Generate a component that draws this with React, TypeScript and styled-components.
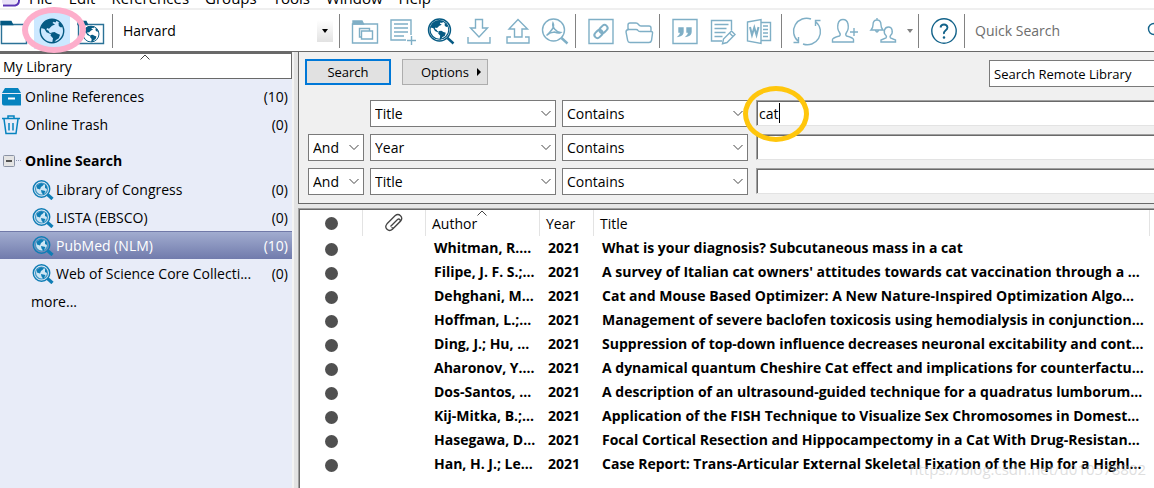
import React from 'react';
import styled, { createGlobalStyle } from 'styled-components';

const GlobalStyle = createGlobalStyle`
  * { box-sizing: border-box; }
  body { margin: 0; background: #fff; }
  body, button, input, select, table {
    font-family: 'Open Sans', 'Noto Sans', sans-serif;
    font-size: 14px;
    line-height: 20px;
    color: #000;
  }
`;

const Page = styled.div`
  display: flex;
  flex-direction: column;
  min-height: 100vh;
  overflow: hidden;
  position: relative;
`;

/* Menu bar */
const MenuBar = styled.nav`
  display: flex;
  align-items: flex-end;
  height: 10px;
  border-bottom: 2px solid #efefef;
  overflow: hidden;
`;
const Logo = styled.svg`
  flex: none;
  width: 20px;
  height: 20px;
  margin: 0 8px 1px 1px;
`;
const MenuItem = styled.button`
  flex: none;
  height: 20px;
  margin-right: 16px;
  padding: 0;
  border: 0;
  background: none;
  font-size: 15px;
  white-space: nowrap;
`;

/* Toolbar */
const Toolbar = styled.div`
  display: flex;
  align-items: center;
  height: 42px;
  border-bottom: 1px solid #696969;
`;
const ModeGroup = styled.div`
  display: flex;
  flex: none;
  margin-left: -5px;
  padding-right: 2px;
`;
const ToolButton = styled.button<{ $active?: boolean }>`
  position: relative;
  flex: none;
  display: flex;
  align-items: center;
  justify-content: center;
  width: 38px;
  height: 36px;
  padding: 0;
  border: 1px solid #fff;
  border-width: 0 1px;
  background: ${(p) => (p.$active ? '#cce8ff' : 'none')};
`;
const Divider = styled.span`
  flex: none;
  width: 1px;
  height: 34px;
  margin: 0 6px 0 1px;
  background: #828282;
`;
const Glyph = styled.svg<{ $tone?: string }>`
  flex: none;
  width: 28px;
  height: 28px;
  overflow: visible;
  fill: none;
  stroke: ${(p) => p.$tone || '#7fafc6'};
  stroke-width: 1.4;
`;
const PinkRing = styled.span`
  position: absolute;
  z-index: 2;
  left: -12px;
  top: -6px;
  width: 64px;
  height: 46px;
  border: 6px solid #fdaecb;
  border-radius: 50%;
  pointer-events: none;
`;
const StyleBox = styled.div`
  position: relative;
  flex: none;
  display: flex;
  align-items: center;
  width: 219px;
`;
const StyleSelect = styled.select`
  appearance: none;
  width: 100%;
  height: 26px;
  padding: 0 24px 0 4px;
  border: 0;
  background: #fff;
`;
const StyleArrow = styled.span`
  position: absolute;
  right: 5px;
  display: flex;
  align-items: center;
  justify-content: center;
  width: 16px;
  height: 22px;
  background: linear-gradient(#fff, #e2e2e2);
  pointer-events: none;
`;
const Triangle = styled.span<{ $color: string }>`
  border: 3px solid transparent;
  border-top: 4px solid ${(p) => p.$color};
  border-bottom: 0;
`;
const MoreButton = styled.button`
  flex: none;
  display: flex;
  align-items: center;
  justify-content: center;
  width: 15px;
  height: 34px;
  padding: 0;
  border: 0;
  background: none;
`;
const QuickSearch = styled.label`
  display: flex;
  align-items: center;
  flex: 1;
  min-width: 0;
  margin-right: -12px;
`;
const QuickInput = styled.input`
  flex: 1;
  min-width: 0;
  height: 26px;
  padding: 0 4px;
  border: 0;
  outline: 0;
  &::placeholder { color: #6d6d6d; opacity: 1; }
`;

/* Body */
const Body = styled.div`
  display: flex;
  flex: 1;
`;
const Sidebar = styled.aside`
  flex: none;
  width: 292px;
  background: #e8ecf8;
`;
const LibraryHeader = styled.button`
  position: relative;
  display: block;
  width: 100%;
  height: 27px;
  padding: 2px 3px 0;
  border: 1px solid #696969;
  border-top-width: 2px;
  border-left: 0;
  background: #fff;
  text-align: left;
`;
const SortMark = styled.svg`
  position: absolute;
  left: calc(50% - 6px);
  top: 0;
  width: 10px;
  height: 6px;
  fill: none;
  stroke: #444;
`;
const GroupList = styled.ul`
  margin: 0;
  padding: 4px 0 0;
  list-style: none;
`;
const GroupRow = styled.li<{ $inset?: number; $selected?: boolean; $head?: boolean }>`
  display: flex;
  align-items: center;
  height: 28px;
  margin-top: ${(p) => (p.$head ? 8 : 0)}px;
  padding: ${(p) => (p.$inset ? 2 : 0)}px 4px 0 ${(p) => p.$inset ?? 1}px;
  font-weight: ${(p) => (p.$head ? 700 : 400)};
  color: ${(p) => (p.$selected ? '#fff' : '#000')};
  background: ${(p) => (p.$selected ? 'linear-gradient(#a3aed1, #717bac)' : 'none')};
  box-shadow: ${(p) => (p.$selected ? 'inset 0 1px 0 #7079a8' : 'none')};
`;
const RowIcon = styled.svg<{ $wide?: boolean }>`
  flex: none;
  width: ${(p) => (p.$wide ? 22 : 20)}px;
  height: 20px;
  margin-right: ${(p) => (p.$wide ? 2 : 4)}px;
`;
const GroupName = styled.span`
  flex: 1;
  white-space: nowrap;
`;
const Splitter = styled.div`
  flex: none;
  width: 6px;
  background: #e3e3e3;
  border-left: 2px solid #f4f4f4;
`;
const Main = styled.main`
  display: flex;
  flex-direction: column;
  flex: 1;
  min-width: 0;
  gap: 4px;
  background: #e6e6e6;
`;

/* Search panel */
const SearchPanel = styled.form`
  padding: 7px 0 8px 6px;
  background: #f0f0f0;
  border-left: 1px solid #696969;
  border-bottom: 1px solid #696969;
`;
const Actions = styled.div`
  display: flex;
  align-items: flex-start;
  gap: 11px;
  margin-bottom: 13px;
`;
const ActionButton = styled.button<{ $primary?: boolean }>`
  display: flex;
  align-items: center;
  justify-content: center;
  gap: 8px;
  width: 86px;
  height: 26px;
  padding: 0 0 0 ${(p) => (p.$primary ? 0 : 12)}px;
  border: ${(p) => (p.$primary ? '2px solid #0078d7' : '1px solid #adadad')};
  background: #e1e1e1;
  font-size: 13px;
`;
const RightMark = styled.span`
  border: 4px solid transparent;
  border-left: 4px solid #000;
  border-right: 0;
`;
const ScopeSelect = styled.select`
  appearance: none;
  width: 165px;
  height: 27px;
  margin: 1px 0 0 auto;
  padding: 0 4px;
  border: 1px solid #7a7a7a;
  border-right: 0;
  border-radius: 0;
  background: #fff;
  font-size: 13px;
`;
const Criteria = styled.div`
  display: grid;
  grid-template-columns: 56px 186px 186px 1fr;
  gap: 7px;
  column-gap: 6px;
  padding-left: 3px;
`;
const PickBox = styled.div`
  position: relative;
  display: flex;
`;
const Pick = styled.select`
  appearance: none;
  width: 100%;
  height: 27px;
  padding: 0 20px 0 4px;
  border: 1px solid #7a7a7a;
  border-radius: 0;
  background: #fff;
`;
const Chevron = styled.svg`
  position: absolute;
  right: 5px;
  top: 10px;
  width: 10px;
  height: 7px;
  fill: none;
  stroke: #444;
  pointer-events: none;
`;
const TermBox = styled.div`
  position: relative;
  padding-left: 2px;
`;
const Term = styled.input`
  width: 100%;
  height: 26px;
  padding: 0 2px;
  border: 1px solid #a0a0a0;
  border-bottom-color: #e3e3e3;
  border-right: 0;
  box-shadow: inset 1px 1px 0 #696969;
  outline: 0;
`;
const Caret = styled.span`
  position: absolute;
  left: 25px;
  top: 3px;
  width: 1px;
  height: 20px;
  background: #000;
`;
const YellowRing = styled.span`
  position: absolute;
  z-index: 2;
  left: -11px;
  top: -14px;
  width: 66px;
  height: 56px;
  border: 5px solid #ffc60c;
  border-radius: 50%;
  pointer-events: none;
`;

/* Results */
const Results = styled.div`
  flex: 1;
  background: #fff;
  border-top: 1px solid #a0a0a0;
  border-left: 1px solid #a0a0a0;
  box-shadow: inset 1px 1px 0 #696969;
  padding: 1px 0 0 1px;
`;
const Table = styled.table`
  width: 100%;
  table-layout: fixed;
  border-collapse: separate;
  border-spacing: 0;
`;
const Col = styled.col<{ $w?: number }>`
  width: ${(p) => (p.$w ? `${p.$w}px` : 'auto')};
`;
const HeadCell = styled.th<{ $center?: boolean }>`
  position: relative;
  height: 26px;
  padding: ${(p) => (p.$center ? '0 6px 2px' : '2px 6px 0')};
  border-right: 1px solid #e3e3e3;
  font-weight: 400;
  text-align: ${(p) => (p.$center ? 'center' : 'left')};
  white-space: nowrap;
`;
const Cell = styled.td<{ $center?: boolean }>`
  height: 24px;
  padding: 0 0 0 ${(p) => (p.$center ? 0 : 8)}px;
  font-weight: 700;
  font-size: 14px;
  text-align: ${(p) => (p.$center ? 'center' : 'left')};
  white-space: nowrap;
`;
const Dot = styled.span`
  display: inline-block;
  width: 13px;
  height: 13px;
  border-radius: 50%;
  background: #505050;
  vertical-align: middle;
`;
const ClipIcon = styled.svg`
  width: 20px;
  height: 20px;
  vertical-align: middle;
  fill: none;
  stroke: #444;
  stroke-width: 1.3;
`;
const Watermark = styled.span`
  position: absolute;
  right: 8px;
  bottom: 9px;
  color: rgba(190, 190, 190, 0.5);
  font-size: 15px;
  white-space: nowrap;
  pointer-events: none;
`;

const Land = ({ c }: { c: string }) => (
  <g fill={c} stroke="none">
    <path d="M3.500 9C5.500 4.500 9.500 2.300 14 2.300L19 3l-1.500 2.500-2-.8-1 1.300 2.500 1.500-3 1.200-3 3-2-.7-.5 1.800 2 1 .8 1.700 2 .8-.8.8-4-1.800L6.500 12 3 11z" />
    <path d="M13.500 15.500l3-.5 2.500 1.500 3 1.200-1.200 3.500-2.800 1.800-2.500 3.300-1.200-.8.7-4.200-2.500-2.800z" />
    <path d="M20.500 6l2-.2 2 4-1.500.7-2.200-1.500z" />
  </g>
);
const Globe = ({ c }: { c: string }) => (
  <>
    <circle cx="14" cy="14" r="11.7" stroke={c} />
    <Land c={c} />
  </>
);
const NAVY = '#055a83';

const FolderIcon = () => (
  <Glyph $tone="#2b7297">
    <path d="M1.500 7.500h25v19h-25z" />
    <path d="M1 4.500h10l1.500 3H1z" fill={NAVY} stroke={NAVY} />
  </Glyph>
);
const GlobeIcon = () => (
  <Glyph $tone={NAVY}><Globe c={NAVY} /></Glyph>
);
const FolderGlobeIcon = () => (
  <Glyph $tone="#2b7297">
    <path d="M2.500 7.500h25v19h-25z" />
    <path d="M2 4.500h8l1.500 3H2z" fill={NAVY} stroke={NAVY} />
    <circle cx="15" cy="17" r="9" fill="#fff" stroke="none" />
    <g transform="translate(5.500 7.500) scale(.68)"><Globe c={NAVY} /></g>
  </Glyph>
);
const CopyGroupIcon = () => (
  <Glyph>
    <path d="M1.500 7h25v19h-25z" />
    <path d="M2 4h9l1.500 3H2z" fill="#7fafc6" />
    <path d="M10 20H8.500v-8.500h10V14M10.500 14h11v8h-11z" />
  </Glyph>
);
const NewRefIcon = () => (
  <Glyph>
    <path d="M17 23H2V3h20v15M22.500 19v9M18 23.500h9" />
    <path d="M5 7h14M5 11h14M5 15h14M5 19h10" />
  </Glyph>
);
const OnlineSearchIcon = () => (
  <Glyph $tone={NAVY}>
    <circle cx="12.500" cy="13" r="11" />
    <g transform="translate(1.200 1.700) scale(.8)"><Globe c={NAVY} /></g>
    <path d="M20.500 21l6 5.500" strokeWidth="2.400" />
  </Glyph>
);
const ImportIcon = () => (
  <Glyph>
    <path d="M10.500 2.500h7V11h5L14 20l-8.500-9h5zM3 20v6h22v-6" />
  </Glyph>
);
const ExportIcon = () => (
  <Glyph>
    <path d="M11.500 20v-8H6L15 2.500l9.500 9.500H19v8zM8 20H4v6h22v-6h-4" />
  </Glyph>
);
const FullTextIcon = () => (
  <Glyph>
    <circle cx="12.500" cy="13" r="11" />
    <path d="M20.500 21l6 5.500" strokeWidth="2.400" />
    <path d="M12 6q-1 3 1.500 6t6 3.500q-2 1.200-6-.500-4 0-8 3.500 3-2.500 5.500-6T12 6z" strokeWidth="1.500" />
  </Glyph>
);
const LinkIcon = () => (
  <Glyph>
    <path d="M2 2.500h24v24H2z" />
    <g strokeWidth="2" transform="rotate(-45 14 14.500)">
      <rect x="6" y="11.500" width="9" height="6" rx="3" />
      <rect x="13" y="11.500" width="9" height="6" rx="3" />
    </g>
  </Glyph>
);
const OpenIcon = () => (
  <Glyph>
    <path d="M3 12V8q0-2 2-2h6q1.500 0 2.500 1.500T16 9h8q2 0 2 2v3M4 12.500h7q1.500 0 2 1t2 1h11q2 0 1.500 2l-1 7q-.5 2-2.500 2H5q-2 0-2.300-2L1 15q0-2.500 3-2.500z" />
  </Glyph>
);
const QuoteIcon = () => (
  <Glyph>
    <path d="M2 2.500h24v24H2z" />
    <path d="M8 11h4v4q0 3-4 4 2-2 1.500-4H8zM16 11h4v4q0 3-4 4 2-2 1.500-4H16z" fill="#7fafc6" />
  </Glyph>
);
const EditIcon = () => (
  <Glyph>
    <path d="M13 24H2.500V3.500h20V13" />
    <path d="M5.500 7.500h14M5.500 11.500h12M5.500 15.500h11M5.500 19.500h8" />
    <path d="M22.500 14l3.500 3.500-8 8-4.500 1.200 1-4.700zM20.500 16l3.500 3.500" />
  </Glyph>
);
const WordIcon = () => (
  <Glyph>
    <path d="M.5 5L14 2.500v24L.5 24zM14 5.500h9.500v18H14M16 9h5M16 12.500h5M16 16h5M16 19.500h5" />
    <path d="M3 10l2 8 2.300-7.500L9.500 18l2-8" strokeWidth="2" />
  </Glyph>
);
const SyncIcon = () => (
  <Glyph>
    <path d="M18 2A13 13 0 0 0 5 24M.5 25.500h5V20M10 27A13 13 0 0 0 23 5M27.500 3.500h-5V9" />
  </Glyph>
);
const ShareIcon = () => (
  <Glyph>
    <path d="M1.500 25v-2.500q0-1.500 7-3.500 1.500-1.500 0-3.500Q6 12 7 7q1-4.500 5-4.500T17 7q1 5-1.500 8.500-1.500 2 0 3.500 7 2 7 3.500V25zM23 11v8M19 15h8" />
  </Glyph>
);
const ActivityIcon = () => (
  <Glyph>
    <path d="M2 13q2-2 2-5 0-5 4-5t4 5q0 3 2 5zM8 1v2M6.500 13.500q1.500 3 3 0M12 25v-2l5-2q1-1 0-2.500-2.500-2-1.500-5.500 1-3 4-3t3.500 3q1 3.500-1.500 5.500-1 1.500 0 2.500l5 2v2z" />
  </Glyph>
);
const HelpIcon = () => (
  <Glyph $tone="#13638a">
    <circle cx="14" cy="14" r="12.200" />
    <path d="M10.500 10.500Q11 7.500 14 7.500t3.500 3q0 1.500-2 3T14 17" strokeWidth="1.800" />
    <circle cx="14" cy="20.500" r=".6" />
  </Glyph>
);

const GroupGlobe = () => (
  <RowIcon $wide viewBox="0 0 22 20">
    <circle cx="9.500" cy="9" r="8.200" fill="none" stroke="#0f7db5" strokeWidth="1.500" />
    <circle cx="9.500" cy="9" r="6" fill="#cfe6f4" stroke="#3f97c4" strokeWidth="1.200" />
    <path d="M5 5.500l4-2.500 3 1-1 1.500-2 1.500-1 2.500-3-1zM9 10l4.500 1-2 4-2-2.500zM13 4.500l2 2v2.500l-2-1z" fill="#0f7db5" />
    <path d="M15.500 14.500l5 4.500" stroke="#0f7db5" strokeWidth="3.200" />
  </RowIcon>
);

const references = [
  ['Whitman, R....', 'What is your diagnosis? Subcutaneous mass in a cat'],
  ['Filipe, J. F. S.;...', "A survey of Italian cat owners' attitudes towards cat vaccination through a ..."],
  ['Dehghani, M...', 'Cat and Mouse Based Optimizer: A New Nature-Inspired Optimization Algo...'],
  ['Hoffman, L.;...', 'Management of severe baclofen toxicosis using hemodialysis in conjunction...'],
  ['Ding, J.; Hu, ...', 'Suppression of top-down influence decreases neuronal excitability and cont...'],
  ['Aharonov, Y....', 'A dynamical quantum Cheshire Cat effect and implications for counterfactu...'],
  ['Dos-Santos, ...', 'A description of an ultrasound-guided technique for a quadratus lumborum...'],
  ['Kij-Mitka, B.;...', 'Application of the FISH Technique to Visualize Sex Chromosomes in Domest...'],
  ['Hasegawa, D...', 'Focal Cortical Resection and Hippocampectomy in a Cat With Drug-Resistan...'],
  ['Han, H. J.; Le...', 'Case Report: Trans-Articular External Skeletal Fixation of the Hip for a Highl...'],
];
const databases: [string, string][] = [
  ['Library of Congress', '(0)'],
  ['LISTA (EBSCO)', '(0)'],
  ['PubMed (NLM)', '(10)'],
  ['Web of Science Core Collecti...', '(0)'],
];
const criteria = [
  { join: '', field: 'Title', term: 'cat' },
  { join: 'And', field: 'Year', term: '' },
  { join: 'And', field: 'Title', term: '' },
];
const toolGroups: [string, React.FC][][] = [
  [
    ['Copy to local library', CopyGroupIcon],
    ['New reference', NewRefIcon],
    ['Online search', OnlineSearchIcon],
    ['Import', ImportIcon],
    ['Export', ExportIcon],
    ['Find full text', FullTextIcon],
  ],
  [['Open link', LinkIcon], ['Open file', OpenIcon]],
  [['Insert citation', QuoteIcon], ['Format bibliography', EditIcon], ['Return to word processor', WordIcon]],
  [['Sync library', SyncIcon], ['Share library', ShareIcon], ['Activity feed', ActivityIcon]],
];

const Picker = ({ label, value }: { label: string; value: string }) => (
  <PickBox>
    <Pick aria-label={label} defaultValue={value}>
      <option>{value}</option>
    </Pick>
    <Chevron viewBox="0 0 10 7"><path d="M.5 1l4.500 4.500L9.500 1" /></Chevron>
  </PickBox>
);
const SortUp = () => (
  <SortMark viewBox="0 0 10 6"><path d="M.5 5.500L5 1l4.500 4.500" /></SortMark>
);

export default function App() {
  return (
    <Page>
      <GlobalStyle />
      <MenuBar>
        <Logo viewBox="0 0 20 20">
          <rect x="1" y="0" width="15" height="17" rx="2" fill="#e9e2f8" />
          <path d="M2 18.500h12q4-1 4-5V6" fill="none" stroke="#5b35b5" strokeWidth="2" />
        </Logo>
        {['File', 'Edit', 'References', 'Groups', 'Tools', 'Window', 'Help'].map((m) => (
          <MenuItem key={m}>{m}</MenuItem>
        ))}
      </MenuBar>
      <Toolbar>
        <ModeGroup>
          <ToolButton aria-label="Local library"><FolderIcon /></ToolButton>
          <ToolButton aria-label="Online search mode" $active><GlobeIcon /><PinkRing /></ToolButton>
          <ToolButton aria-label="Integrated mode"><FolderGlobeIcon /></ToolButton>
        </ModeGroup>
        <Divider />
        <StyleBox>
          <StyleSelect aria-label="Output style" defaultValue="Harvard"><option>Harvard</option></StyleSelect>
          <StyleArrow><Triangle $color="#000" /></StyleArrow>
        </StyleBox>
        {toolGroups.map((group, i) => (
          <React.Fragment key={i}>
            <Divider />
            {group.map(([label, Icon]) => (
              <ToolButton key={label} aria-label={label}><Icon /></ToolButton>
            ))}
          </React.Fragment>
        ))}
        <MoreButton aria-label="More sharing"><Triangle $color="#808080" /></MoreButton>
        <Divider />
        <ToolButton aria-label="Help"><HelpIcon /></ToolButton>
        <Divider />
        <QuickSearch>
          <QuickInput aria-label="Quick Search" placeholder="Quick Search" />
          <Glyph $tone="#13638a" viewBox="0 0 28 28"><circle cx="16" cy="12" r="5.500" /><path d="M20 16l6 6" /></Glyph>
        </QuickSearch>
      </Toolbar>
      <Body>
        <Sidebar>
          <LibraryHeader>My Library<SortUp /></LibraryHeader>
          <GroupList>
            <GroupRow>
              <RowIcon viewBox="0 0 20 20">
                <path d="M4 1h13l3 5H1zM1 7h20v9.500q0 2-2 2H3q-2 0-2-2z" fill="#0683bf" />
                <path d="M7 11.500h7" stroke="#fff" strokeWidth="2" />
              </RowIcon>
              <GroupName>Online References</GroupName>(10)
            </GroupRow>
            <GroupRow>
              <RowIcon viewBox="0 0 20 20" fill="none" stroke="#0683bf" strokeWidth="1.500">
                <path d="M1 3.500h18M7 3V1h6v2M3 4l2 14.500h10L17 4M8 8v7.500M12 8v7.500" />
              </RowIcon>
              <GroupName>Online Trash</GroupName>(0)
            </GroupRow>
            <GroupRow $head>
              <RowIcon viewBox="0 0 20 20">
                <rect x="2.500" y="4.500" width="11" height="11" rx="1" fill="#e4e4e4" stroke="#8b93a5" />
                <path d="M5 10h6" stroke="#222" strokeWidth="1.500" />
                <path d="M15 9.500h6" stroke="#8f99b5" strokeDasharray="1 1" />
              </RowIcon>
              <GroupName>Online Search</GroupName>
            </GroupRow>
            {databases.map(([name, count]) => (
              <GroupRow key={name} $inset={32} $selected={name === 'PubMed (NLM)'}>
                <GroupGlobe />
                <GroupName>{name}</GroupName>
                {count}
              </GroupRow>
            ))}
            <GroupRow $inset={31}>more...</GroupRow>
          </GroupList>
        </Sidebar>
        <Splitter />
        <Main>
          <SearchPanel onSubmit={(e) => e.preventDefault()}>
            <Actions>
              <ActionButton $primary type="submit">Search</ActionButton>
              <ActionButton type="button">Options<RightMark /></ActionButton>
              <ScopeSelect aria-label="Search scope" defaultValue="Search Remote Library">
                <option>Search Remote Library</option>
              </ScopeSelect>
            </Actions>
            <Criteria>
              {criteria.map((c, i) => (
                <React.Fragment key={i}>
                  {c.join ? <Picker label="Operator" value={c.join} /> : <span />}
                  <Picker label="Field" value={c.field} />
                  <Picker label="Comparison" value="Contains" />
                  <TermBox>
                    <Term aria-label="Search term" defaultValue={c.term} />
                    {c.term && <><Caret /><YellowRing /></>}
                  </TermBox>
                </React.Fragment>
              ))}
            </Criteria>
          </SearchPanel>
          <Results>
            <Table>
              <colgroup>
                <Col $w={63} /><Col $w={63} /><Col $w={114} /><Col $w={54} /><Col /><Col $w={4} />
              </colgroup>
              <thead>
                <tr>
                  <HeadCell $center><Dot /></HeadCell>
                  <HeadCell $center>
                    <ClipIcon viewBox="0 0 20 20">
                      <path d="M6.500 13.500l7-7q1.300-1 2.300 0t0 2.300l-7.300 7.500q-3 2.500-5.500 0t0-5.500l8-8q3-2.500 5.500 0t0 5.500l-6 6q-1.500 1.300-3 .2" />
                    </ClipIcon>
                  </HeadCell>
                  <HeadCell>Author<SortUp /></HeadCell>
                  <HeadCell>Year</HeadCell>
                  <HeadCell>Title</HeadCell>
                </tr>
              </thead>
              <tbody>
                {references.map(([author, title]) => (
                  <tr key={title}>
                    <Cell $center><Dot /></Cell>
                    <Cell />
                    <Cell>{author}</Cell>
                    <Cell>2021</Cell>
                    <Cell>{title}</Cell>
                  </tr>
                ))}
              </tbody>
            </Table>
          </Results>
        </Main>
      </Body>
      <Watermark>https://blog.csdn.net/u010578802</Watermark>
    </Page>
  );
}
